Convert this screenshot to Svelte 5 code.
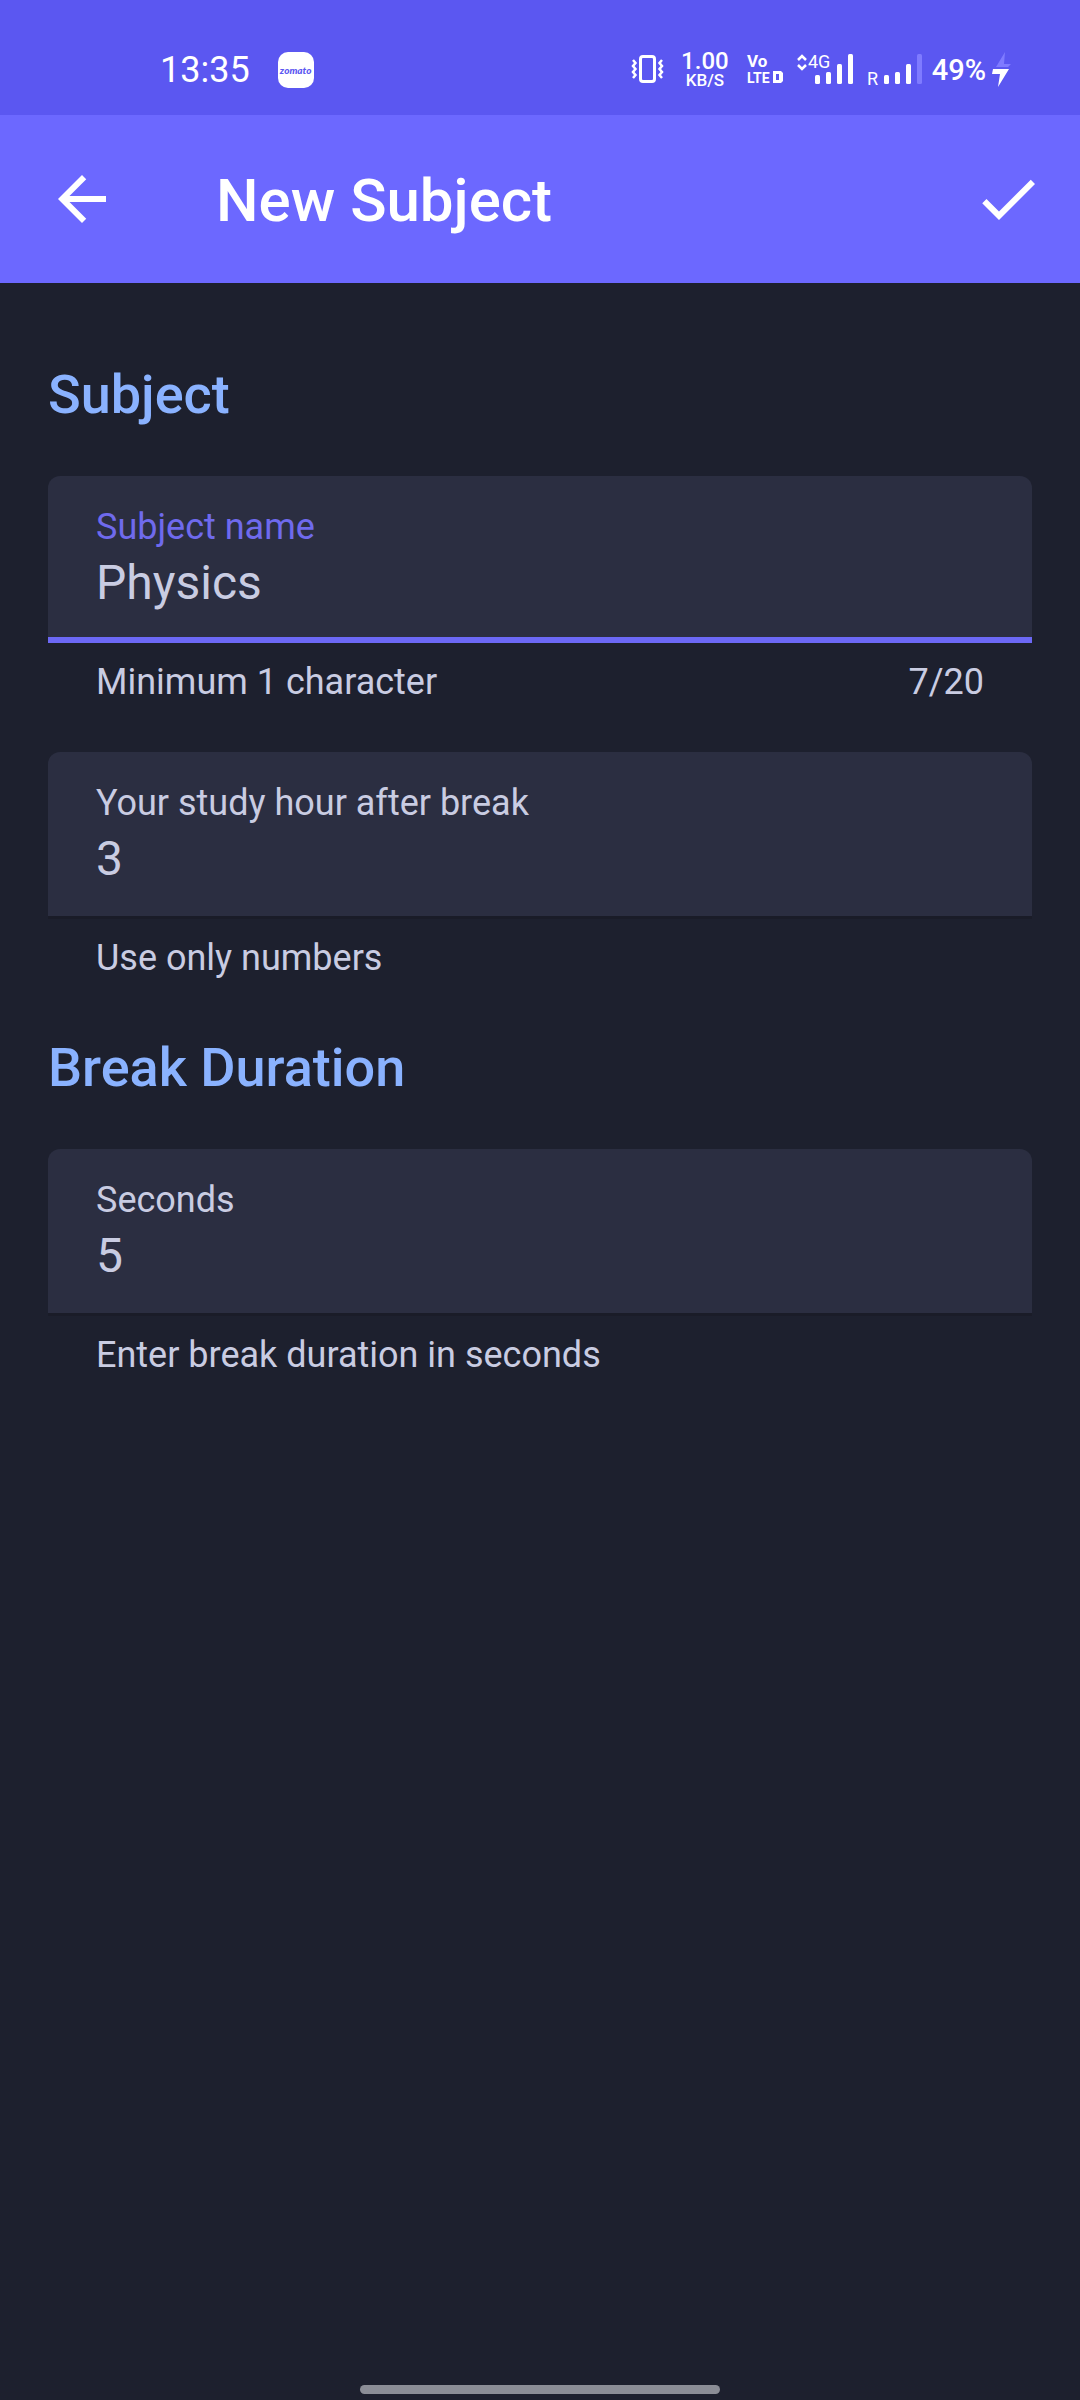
<script>
  let name = $state('Physics');
  let hours = $state('3');
  let seconds = $state('5');
  const limit = 20;
</script>

<div class="screen">
  <div class="status">
    <div class="left">
      <span class="time">13:35</span>
      <span class="app">zomato</span>
    </div>
    <div class="right">
      <svg width="40" height="36" viewBox="0 0 40 36" fill="none" stroke="#fff" aria-hidden="true">
        <rect x="9.500" y="4.500" width="14" height="25" rx="2.500" stroke-width="3" />
        <path d="M2 8l2.500 3-2.500 3 2.500 3-2.500 3 2.500 3-2.500 3M31 8l-2.500 3 2.500 3-2.500 3 2.500 3-2.500 3 2.500 3" stroke-width="2.500" />
      </svg>
      <div class="speed"><b>1.00</b><span>KB/S</span></div>
      <svg width="48" height="36" viewBox="0 0 48 36" fill="#fff" aria-hidden="true">
        <text class="vo" x="8" y="15">Vo</text>
        <text class="lte" x="8" y="31">LTE</text>
        <path fill-rule="evenodd" d="M34 19h8l2 2v8l-2 2h-8zM37 22v6h3v-6z" />
      </svg>
      <svg width="61" height="36" viewBox="0 0 61 36" fill="#fff" aria-hidden="true">
        <path d="M1 8l4-4 4 4M1 13l4 4 4-4" fill="none" stroke="#fff" stroke-width="2.500" />
        <text class="net" x="11" y="16">4G</text>
        <rect x="18" y="23" width="5" height="9" rx="1.500" />
        <rect x="29" y="20" width="5" height="12" rx="1.500" />
        <rect x="40" y="12" width="5" height="20" rx="1.500" />
        <rect x="51" y="2" width="5" height="30" rx="1.500" />
      </svg>
      <svg width="54" height="36" viewBox="0 0 54 36" fill="#fff" aria-hidden="true">
        <text class="net" x="-1" y="33">R</text>
        <rect x="16" y="23" width="5" height="9" rx="1.500" />
        <rect x="27" y="20" width="5" height="12" rx="1.500" />
        <rect x="38" y="12" width="5" height="20" rx="1.500" />
        <rect x="49" y="2" width="5" height="30" rx="1.500" fill="#7f7bff" />
      </svg>
      <div class="battery">
        <span>49%</span>
        <svg width="20" height="36" viewBox="0 0 20 36" aria-hidden="true">
          <path d="M13 0L4 15h12l3-3h-7z" fill="#7f7bff" />
          <path d="M1 17h16L6 35l2-13H0z" fill="#fff" />
        </svg>
      </div>
    </div>
  </div>

  <header>
    <button type="button" aria-label="Back">
      <svg width="72" height="72" viewBox="0 0 24 24" fill="#fff"><path d="M20 11H7.830l5.590-5.590L12 4l-8 8 8 8 1.410-1.410L7.830 13H20v-2z" /></svg>
    </button>
    <h1>New Subject</h1>
    <button type="submit" form="subject-form" aria-label="Save">
      <svg width="72" height="72" viewBox="0 0 24 24" fill="#fff"><path d="M9 16.170L4.830 12l-1.420 1.410L9 19 21 7l-1.410-1.410z" /></svg>
    </button>
  </header>

  <form id="subject-form" onsubmit={(e) => e.preventDefault()}>
    <section>
      <h2>Subject</h2>
      <div class="item">
        <div class="field active">
          <label for="name">Subject name</label>
          <input id="name" type="text" maxlength={limit} bind:value={name} aria-describedby="name-help" />
        </div>
        <p class="help" id="name-help"><span>Minimum 1 character</span><span>{name.length}/{limit}</span></p>
      </div>
      <div class="item">
        <div class="field">
          <label for="hours">Your study hour after break</label>
          <input id="hours" type="text" inputmode="numeric" bind:value={hours} aria-describedby="hours-help" />
        </div>
        <p class="help" id="hours-help">Use only numbers</p>
      </div>
    </section>
    <section>
      <h2>Break Duration</h2>
      <div class="item">
        <div class="field">
          <label for="seconds">Seconds</label>
          <input id="seconds" type="text" inputmode="numeric" bind:value={seconds} aria-describedby="seconds-help" />
        </div>
        <p class="help" id="seconds-help">Enter break duration in seconds</p>
      </div>
    </section>
  </form>

  <div class="home"></div>
</div>

<style>
  :global(body) {
    margin: 0;
    background: #1d202e;
  }
  .screen {
    box-sizing: border-box;
    min-height: 100vh;
    display: flex;
    flex-direction: column;
    background: #1d202e;
    color: #c9cce2;
    font-family: Roboto, sans-serif;
  }
  .status {
    display: flex;
    align-items: center;
    justify-content: space-between;
    padding: 49px 68px 24px 160px;
    background: #5b57f1;
    color: #fff;
  }
  .left {
    display: flex;
    align-items: center;
    gap: 28px;
  }
  .time {
    font-size: 36px;
    line-height: 42px;
  }
  .app {
    display: flex;
    align-items: center;
    justify-content: center;
    width: 36px;
    height: 36px;
    border-radius: 10px;
    background: #fff;
    color: #5b57f1;
    font: italic 900 10px/12px Lato, sans-serif;
  }
  .right {
    display: flex;
    align-items: center;
    gap: 10px;
  }
  .right svg {
    display: block;
    flex: none;
  }
  .speed {
    display: flex;
    flex-direction: column;
    align-items: center;
    font-weight: 500;
  }
  .speed b {
    font-size: 24px;
    font-weight: 500;
    line-height: 20px;
  }
  .speed span {
    font-size: 17px;
    line-height: 18px;
  }
  .vo {
    font-size: 17px;
    font-weight: 700;
  }
  .lte {
    font-size: 14px;
    font-weight: 700;
  }
  .net {
    font-size: 18px;
  }
  .battery {
    display: flex;
    align-items: center;
    gap: 6px;
    font-size: 29px;
    font-weight: 500;
    line-height: 36px;
  }
  header {
    display: flex;
    align-items: center;
    padding: 48px 36px 48px 46px;
    background: #6c68ff;
    color: #fff;
  }
  button {
    display: block;
    padding: 0;
    border: 0;
    background: none;
    cursor: pointer;
  }
  button svg {
    display: block;
  }
  h1 {
    flex: 1;
    margin: 0;
    padding: 4px 0 0 98px;
    font-size: 60px;
    font-weight: 500;
    line-height: 68px;
  }
  form {
    flex: 1;
    display: flex;
    flex-direction: column;
    gap: 57px;
    padding: 80px 48px 48px;
  }
  section {
    display: flex;
    flex-direction: column;
    gap: 49px;
  }
  h2 {
    margin: 0;
    color: #8ab2ff;
    font-size: 54px;
    font-weight: 500;
    line-height: 64px;
  }
  .field {
    display: flex;
    flex-direction: column;
    gap: 6px;
    padding: 30px 48px 28px;
    border-bottom: 3px solid #1a1c28;
    border-radius: 12px 12px 0 0;
    background: #2b2e41;
  }
  .field.active {
    padding-bottom: 25px;
    border-bottom: 6px solid #6c68f5;
  }
  label {
    font-size: 36px;
    line-height: 42px;
  }
  .active label {
    color: #6f6aed;
  }
  input {
    width: 100%;
    height: 58px;
    padding: 0;
    border: 0;
    outline: 0;
    background: none;
    color: inherit;
    font: 48px/58px Roboto, sans-serif;
  }
  .help {
    display: flex;
    justify-content: space-between;
    margin: 18px 48px 0;
    font-size: 36px;
    line-height: 42px;
  }
  .home {
    align-self: center;
    width: calc(100% / 3);
    height: 9px;
    margin-bottom: 6px;
    border-radius: 5px;
    background: #8b8d96;
  }
</style>
